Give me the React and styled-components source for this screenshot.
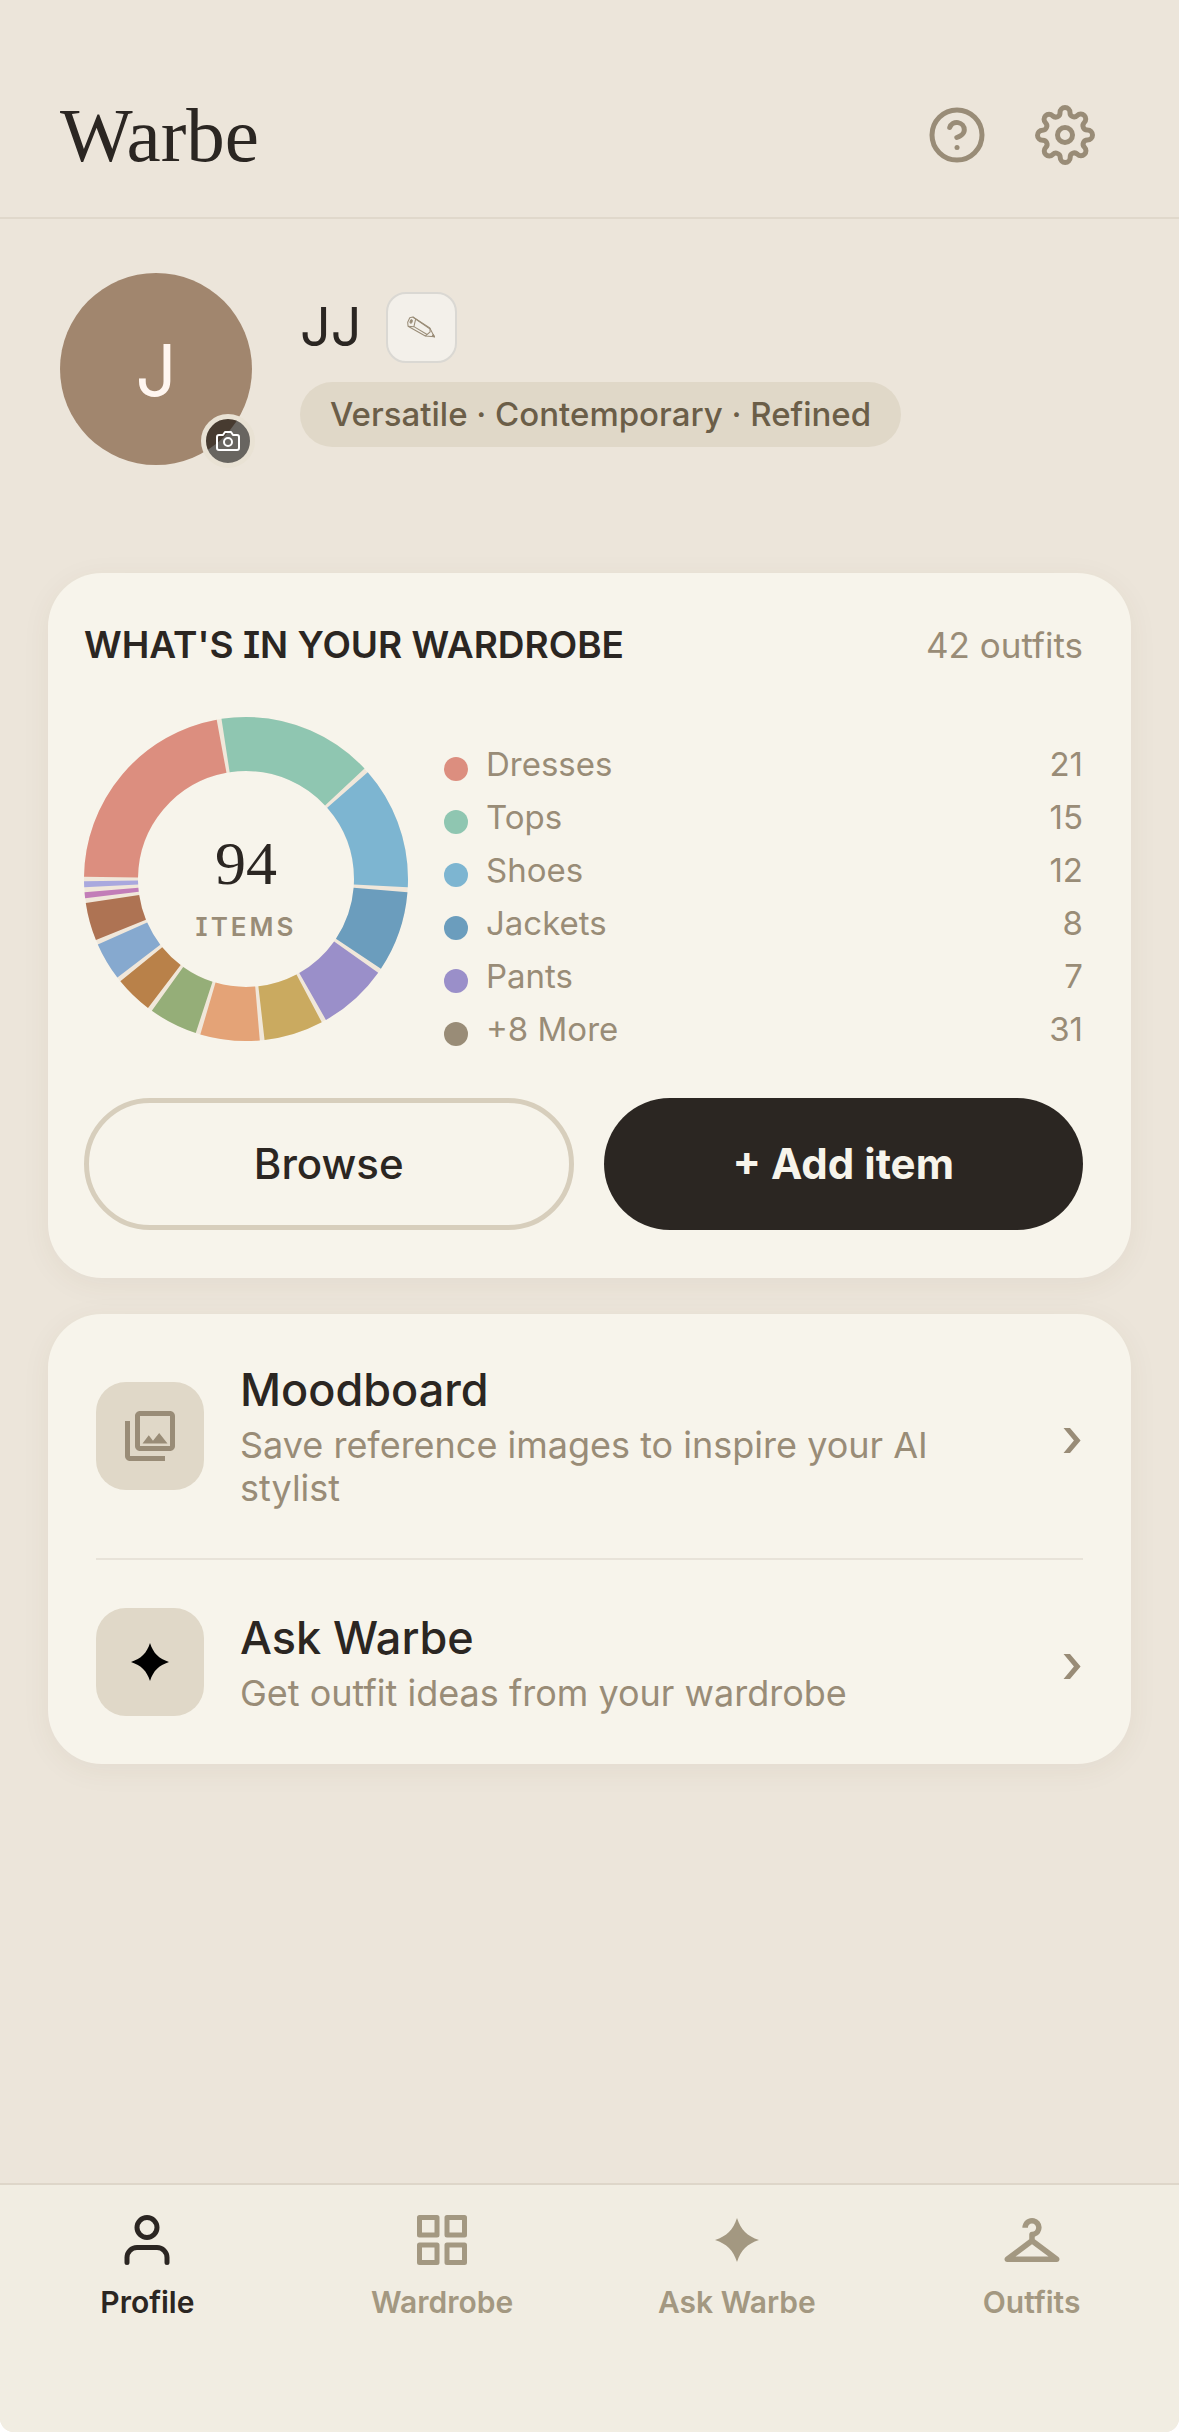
import React from 'react'
import styled, { createGlobalStyle } from 'styled-components'
import { FiCamera, FiGrid, FiHelpCircle, FiSettings, FiUser } from 'react-icons/fi'
import { MdOutlineCheckroom, MdOutlinePhotoLibrary } from 'react-icons/md'

const sans = 'Inter, "Liberation Sans", sans-serif'
const serif = '"Liberation Serif", serif'

const ink = '#2b2622'
const muted = '#998c77'
const sand = '#e0d8c8'
const cream = '#f7f4eb'

const GlobalStyle = createGlobalStyle`
  * {
    box-sizing: border-box;
  }

  body {
    margin: 0;
    background: #ffffff;
    color: ${ink};
    font-family: ${sans};
  }

  h1, h2, h3, p, ul {
    margin: 0;
    padding: 0;
  }

  button {
    font-family: inherit;
    cursor: pointer;
  }
`

const Page = styled.div`
  display: flex;
  flex-direction: column;
  min-height: 100vh;
  overflow: hidden;
  background-color: #ece5da;
  border-radius: 0 0 14px 14px;
`

const Header = styled.header`
  display: flex;
  align-items: center;
  justify-content: space-between;
  padding: 81px 60px 28px;
  border-bottom: 2px solid #e0d8cb;
`

const Logo = styled.h1`
  font-family: ${serif};
  font-size: 77px;
  font-weight: normal;
  line-height: 96px;
`

const HeaderActions = styled.div`
  display: flex;
`

const IconButton = styled.button`
  display: flex;
  align-items: center;
  justify-content: center;
  width: 108px;
  height: 108px;
  padding: 0;
  border: none;
  background: none;
  color: ${muted};
  font-size: 60px;
`

const Main = styled.main`
  flex: 1;
  display: flex;
  flex-direction: column;
  gap: 36px;
  padding: 54px 48px;
`

const Profile = styled.section`
  display: flex;
  align-items: center;
  gap: 48px;
  padding: 0 12px;
  margin-bottom: 72px;
`

const Avatar = styled.div`
  position: relative;
  display: flex;
  align-items: center;
  justify-content: center;
  flex-shrink: 0;
  width: 192px;
  height: 192px;
  border-radius: 50%;
  background-color: #a1866e;
  color: #fff6f0;
  font-size: 72px;
`

const CameraButton = styled.button`
  position: absolute;
  right: -3px;
  bottom: -3px;
  display: flex;
  align-items: center;
  justify-content: center;
  width: 54px;
  height: 54px;
  padding: 0;
  border: 5px solid #e9e2d4;
  border-radius: 50%;
  background-color: rgba(0, 0, 0, 0.56);
  color: #ffffff;
  font-size: 24px;
`

const ProfileInfo = styled.div`
  display: flex;
  flex-direction: column;
  align-items: flex-start;
  gap: 19px;
`

const NameRow = styled.div`
  display: flex;
  align-items: center;
  gap: 24px;
`

const Name = styled.h2`
  font-size: 54px;
  font-weight: 400;
  line-height: 64px;
`

const EditButton = styled.button`
  display: flex;
  align-items: center;
  justify-content: center;
  width: 71px;
  height: 71px;
  padding: 0;
  border: 2px solid #dad8d3;
  border-radius: 20px;
  background-color: #f3f0ea;
  color: ${muted};
`

const StyleTag = styled.p`
  padding: 0 30px;
  border-radius: 33px;
  background-color: ${sand};
  color: #6b5e48;
  font-size: 33px;
  font-weight: 500;
  line-height: 65px;
`

const Card = styled.section`
  border-radius: 54px;
  background-color: ${cream};
  box-shadow: 0 6px 30px rgba(80, 70, 40, 0.06);
`

const WardrobeCard = styled(Card)`
  padding: 48px 48px 48px 36px;
`

const CardHeader = styled.div`
  display: flex;
  align-items: center;
  justify-content: space-between;
  line-height: 48px;
`

const CardTitle = styled.h2`
  font-size: 37px;
  font-weight: 600;
  font-feature-settings: 'cv08';
`

const OutfitCount = styled.span`
  color: ${muted};
  font-size: 35px;
`

const Breakdown = styled.div`
  display: flex;
  align-items: flex-start;
  gap: 36px;
  margin: 48px 0 42px;
`

const Donut = styled.div`
  display: grid;
  flex-shrink: 0;
  width: 324px;
  height: 324px;

  > * {
    grid-area: 1 / 1;
  }
`

const DonutLabel = styled.div`
  display: flex;
  flex-direction: column;
  align-items: center;
  justify-content: center;
  padding-top: 12px;
`

const Total = styled.span`
  font-family: ${serif};
  font-size: 62px;
  line-height: 72px;
`

const TotalCaption = styled.span`
  margin-top: 12px;
  color: ${muted};
  font-size: 26px;
  font-weight: 600;
  letter-spacing: 3px;
  line-height: 32px;
  font-feature-settings: 'cv08';
`

const Legend = styled.ul`
  flex: 1;
  padding-top: 21px;
  list-style: none;
`

const LegendRow = styled.li`
  display: flex;
  align-items: center;
  color: ${muted};
  font-size: 33px;
  line-height: 53px;
`

const Dot = styled.span`
  width: 24px;
  height: 24px;
  margin: 8px 18px 0 0;
  border-radius: 50%;
  background-color: ${props => props.$color};
`

const LegendCount = styled.span`
  margin-left: auto;
`

const Actions = styled.div`
  display: flex;
  gap: 30px;
`

const PillButton = styled.button`
  box-sizing: content-box;
  flex: 1;
  padding: 0;
  border: ${props => (props.$primary ? 'none' : '5px solid #d7cebc')};
  border-radius: 66px;
  background-color: ${props => (props.$primary ? ink : 'transparent')};
  color: ${props => (props.$primary ? cream : ink)};
  font-size: 42px;
  font-weight: ${props => (props.$primary ? 700 : 500)};
  line-height: ${props => (props.$primary ? 132 : 122)}px;
`

const LinksCard = styled(Card)`
  padding: 0 48px;
`

const LinkRow = styled.a`
  display: flex;
  align-items: center;
  padding: 48px 0;
  color: ${ink};
  text-decoration: none;

  & + & {
    border-top: 2px solid #e8e3d9;
  }
`

const LinkIcon = styled.span`
  display: flex;
  align-items: center;
  justify-content: center;
  flex-shrink: 0;
  width: 108px;
  height: 108px;
  margin-right: 36px;
  border-radius: 30px;
  background-color: ${sand};
  color: ${props => props.$color};
  font-size: 60px;
`

const LinkText = styled.div`
  flex: 1;
`

const LinkTitle = styled.h3`
  margin-bottom: 6px;
  font-size: 45px;
  font-weight: 500;
  line-height: 56px;
`

const LinkDescription = styled.p`
  max-width: 720px;
  color: ${muted};
  font-size: 36px;
  line-height: 43px;
`

const Chevron = styled.span`
  padding-top: 4px;
  color: ${muted};
  font-size: 54px;
  font-weight: 500;
  line-height: 56px;
`

const TabBar = styled.nav`
  display: grid;
  grid-template-columns: repeat(4, 1fr);
  padding: 22px 0 112px;
  border-top: 2px solid #ded6c9;
  background-color: #f1ede2;
`

const Tab = styled.a`
  display: flex;
  flex-direction: column;
  align-items: center;
  gap: 11px;
  color: ${props => (props.$active ? ink : '#a39881')};
  font-size: 30px;
  font-weight: 600;
  line-height: 36px;
  text-decoration: none;
`

const TabIcon = styled.span`
  display: flex;
  align-items: center;
  height: 66px;
  font-size: ${props => props.$size || 60}px;
`

const categories = [
  { name: 'Dresses', count: 21, color: '#dc8e7f' },
  { name: 'Tops', count: 15, color: '#8fc6b1' },
  { name: 'Shoes', count: 12, color: '#7db5d1' },
  { name: 'Jackets', count: 8, color: '#6b9dbd' },
  { name: 'Pants', count: 7, color: '#9a8fc9' },
  { name: 'Skirts', count: 6, color: '#caaa60' },
  { name: 'Bags', count: 6, color: '#e4a377' },
  { name: 'Sweaters', count: 5, color: '#95ae78' },
  { name: 'Shorts', count: 4, color: '#b98149' },
  { name: 'Jewelry', count: 4, color: '#86a9cf' },
  { name: 'Belts', count: 4, color: '#ae7353' },
  { name: 'Hats', count: 1, color: '#c27db8' },
  { name: 'Scarves', count: 1, color: '#a9a8de' },
]

const total = categories.reduce((sum, category) => sum + category.count, 0)
const shown = categories.slice(0, 5)
const hidden = categories.slice(5)

const legend = [
  ...shown,
  {
    name: `+${hidden.length} More`,
    count: hidden.reduce((sum, category) => sum + category.count, 0),
    color: muted,
  },
]

function Sparkle({ size }) {
  return (
    <svg width={size} height={size} viewBox="-22 -22 44 44" fill="currentColor" aria-hidden="true">
      <path d="M0-22C4-10 10-4 22 0C10 4 4 10 0 22C-4 10-10 4-22 0C-10-4-4-10 0-22Z" />
    </svg>
  )
}

function Pencil() {
  return (
    <svg width="28" height="22" viewBox="0 0 81 62" fill="none" stroke="currentColor" strokeWidth="3" strokeLinejoin="round" aria-hidden="true">
      <path d="M17 2 66 34 79 59 53 57 3 29 2 17 8 4Z" />
      <path d="M17 2 25 8 20 30 3 29M25 8 68 38M20 30 57 52M66 34 67 45 53 57" />
      <ellipse cx="12" cy="15" rx="3" ry="5" transform="rotate(20 12 15)" fill="currentColor" />
      <path d="M73 57 76 53 80 60Z" fill="currentColor" />
    </svg>
  )
}

// Starts at nine o'clock and runs clockwise, one degree per path unit
function DonutChart() {
  const gap = 1.7
  let start = 0
  return (
    <svg viewBox="0 0 324 324" fill="none" strokeWidth="54" aria-hidden="true">
      <circle cx="162" cy="162" r="135" stroke="#f0e7da" />
      <g transform="rotate(180 162 162)">
        {categories.map(({ name, count, color }) => {
          const sweep = (count / total) * 360
          const offset = start + gap / 2
          start += sweep
          return (
            <circle
              key={name}
              cx="162"
              cy="162"
              r="135"
              stroke={color}
              pathLength="360"
              strokeDasharray={`${sweep - gap} 360`}
              strokeDashoffset={-offset}
            />
          )
        })}
      </g>
    </svg>
  )
}

function App() {
  return (
    <>
      <GlobalStyle />
      <Page>
        <Header>
          <Logo>Warbe</Logo>
          <HeaderActions>
            <IconButton aria-label="Help"><FiHelpCircle /></IconButton>
            <IconButton aria-label="Settings"><FiSettings /></IconButton>
          </HeaderActions>
        </Header>

        <Main>
          <Profile>
            <Avatar>
              J
              <CameraButton aria-label="Change photo"><FiCamera /></CameraButton>
            </Avatar>
            <ProfileInfo>
              <NameRow>
                <Name>JJ</Name>
                <EditButton aria-label="Edit name"><Pencil /></EditButton>
              </NameRow>
              <StyleTag>Versatile · Contemporary · Refined</StyleTag>
            </ProfileInfo>
          </Profile>

          <WardrobeCard>
            <CardHeader>
              <CardTitle>WHAT'S IN YOUR WARDROBE</CardTitle>
              <OutfitCount>42 outfits</OutfitCount>
            </CardHeader>
            <Breakdown>
              <Donut>
                <DonutChart />
                <DonutLabel>
                  <Total>{total}</Total>
                  <TotalCaption>ITEMS</TotalCaption>
                </DonutLabel>
              </Donut>
              <Legend>
                {legend.map(item => (
                  <LegendRow key={item.name}>
                    <Dot $color={item.color} />
                    {item.name}
                    <LegendCount>{item.count}</LegendCount>
                  </LegendRow>
                ))}
              </Legend>
            </Breakdown>
            <Actions>
              <PillButton>Browse</PillButton>
              <PillButton $primary>+ Add item</PillButton>
            </Actions>
          </WardrobeCard>

          <LinksCard>
            <LinkRow href="#moodboard">
              <LinkIcon $color={muted}><MdOutlinePhotoLibrary /></LinkIcon>
              <LinkText>
                <LinkTitle>Moodboard</LinkTitle>
                <LinkDescription>Save reference images to inspire your AI stylist</LinkDescription>
              </LinkText>
              <Chevron aria-hidden="true">›</Chevron>
            </LinkRow>
            <LinkRow href="#ask">
              <LinkIcon $color="#000000"><Sparkle size={38} /></LinkIcon>
              <LinkText>
                <LinkTitle>Ask Warbe</LinkTitle>
                <LinkDescription>Get outfit ideas from your wardrobe</LinkDescription>
              </LinkText>
              <Chevron aria-hidden="true">›</Chevron>
            </LinkRow>
          </LinksCard>
        </Main>

        <TabBar>
          <Tab href="#profile" $active aria-current="page">
            <TabIcon><FiUser /></TabIcon>
            Profile
          </Tab>
          <Tab href="#wardrobe">
            <TabIcon><FiGrid /></TabIcon>
            Wardrobe
          </Tab>
          <Tab href="#ask">
            <TabIcon><Sparkle size={44} /></TabIcon>
            Ask Warbe
          </Tab>
          <Tab href="#outfits">
            <TabIcon $size={66}><MdOutlineCheckroom /></TabIcon>
            Outfits
          </Tab>
        </TabBar>
      </Page>
    </>
  )
}

export default App
